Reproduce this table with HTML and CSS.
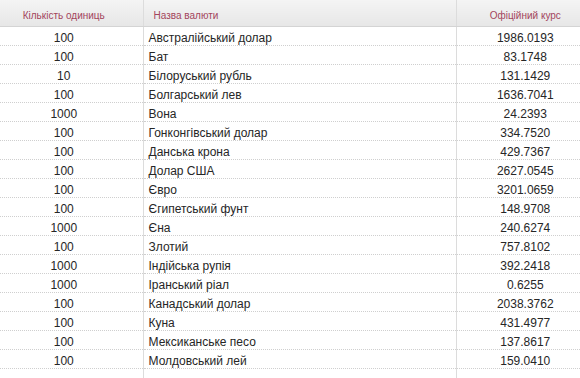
FILE: index.html
```html
<!DOCTYPE html>
<html lang="uk">
<head>
    <meta charset="UTF-8">
    <title>Офіційний курс валют</title>
    <link rel="stylesheet" href="styles.css">
</head>
<body>
    <div class="wrap">
        <table class="rates">
            <colgroup>
                <col class="w-units">
                <col class="w-name">
                <col class="w-rate">
            </colgroup>
            <thead>
                <tr>
                    <th class="col-units">Кількість одиниць</th>
                    <th class="col-name">Назва валюти</th>
                    <th class="col-rate">Офіційний курс</th>
                </tr>
            </thead>
            <tbody>
                <tr><td class="col-units">100</td><td class="col-name">Австралійський долар</td><td class="col-rate">1986.0193</td></tr>
                <tr><td class="col-units">100</td><td class="col-name">Бат</td><td class="col-rate">83.1748</td></tr>
                <tr><td class="col-units">10</td><td class="col-name">Білоруський рубль</td><td class="col-rate">131.1429</td></tr>
                <tr><td class="col-units">100</td><td class="col-name">Болгарський лев</td><td class="col-rate">1636.7041</td></tr>
                <tr><td class="col-units">1000</td><td class="col-name">Вона</td><td class="col-rate">24.2393</td></tr>
                <tr><td class="col-units">100</td><td class="col-name">Гонконгівський долар</td><td class="col-rate">334.7520</td></tr>
                <tr><td class="col-units">100</td><td class="col-name">Данська крона</td><td class="col-rate">429.7367</td></tr>
                <tr><td class="col-units">100</td><td class="col-name">Долар США</td><td class="col-rate">2627.0545</td></tr>
                <tr><td class="col-units">100</td><td class="col-name">Євро</td><td class="col-rate">3201.0659</td></tr>
                <tr><td class="col-units">100</td><td class="col-name">Єгипетський фунт</td><td class="col-rate">148.9708</td></tr>
                <tr><td class="col-units">1000</td><td class="col-name">Єна</td><td class="col-rate">240.6274</td></tr>
                <tr><td class="col-units">100</td><td class="col-name">Злотий</td><td class="col-rate">757.8102</td></tr>
                <tr><td class="col-units">1000</td><td class="col-name">Індійська рупія</td><td class="col-rate">392.2418</td></tr>
                <tr><td class="col-units">1000</td><td class="col-name">Іранський ріал</td><td class="col-rate">0.6255</td></tr>
                <tr><td class="col-units">100</td><td class="col-name">Канадський долар</td><td class="col-rate">2038.3762</td></tr>
                <tr><td class="col-units">100</td><td class="col-name">Куна</td><td class="col-rate">431.4977</td></tr>
                <tr><td class="col-units">100</td><td class="col-name">Мексиканське песо</td><td class="col-rate">137.8617</td></tr>
                <tr><td class="col-units">100</td><td class="col-name">Молдовський лей</td><td class="col-rate">159.0410</td></tr>
                <tr><td class="col-units">&nbsp;</td><td class="col-name">&nbsp;</td><td class="col-rate">&nbsp;</td></tr>
            </tbody>
        </table>
    </div>
</body>
</html>
```

FILE: styles.css
```css
body {
    margin: 0;
    background-color: #fff;
    overflow: hidden;
}

.wrap {
    margin-left: -15px;
}

.rates {
    border-collapse: collapse;
    table-layout: fixed;
    width: 609px;
    font-family: "Liberation Sans", Arial, sans-serif;
    font-size: 12px;
    color: #262626;
}

.w-units {
    width: 158px;
}

.w-name {
    width: 313px;
}

.rates th {
    padding: 9px 0 3px;
    line-height: 14px;
    font-size: 10px;
    font-weight: normal;
    color: #a3455c;
    background: linear-gradient(#f4f4f4, #e7e7e7);
    border-bottom: 1px solid #d4d4d4;
}

.rates td {
    padding: 4px 0 0;
    line-height: 14px;
    border-bottom: 1px dotted #cfcfcf;
}

.rates th + th,
.rates td + td {
    border-left: 1px solid #dcdcdc;
}

.col-units,
.col-rate {
    text-align: center;
}

.rates .col-name {
    text-align: left;
    padding-left: 5px;
}

.rates th.col-name {
    padding-left: 10px;
}
```
